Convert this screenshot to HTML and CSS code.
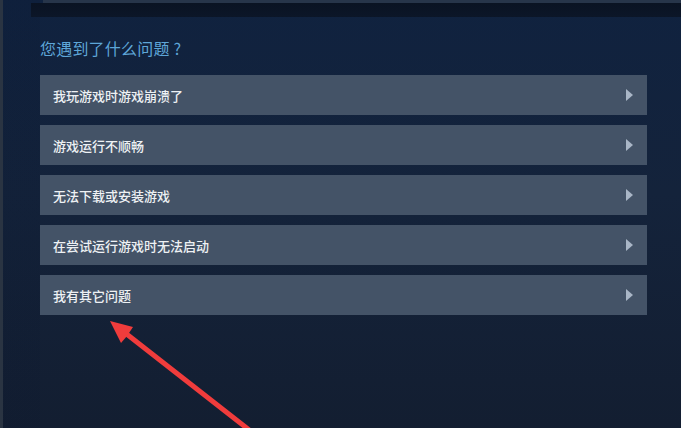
FILE: index.html
```html
<!DOCTYPE html>
<html lang="zh-CN">
<head>
<meta charset="utf-8">
<title>Steam 客服</title>
<link rel="stylesheet" href="styles.css">
</head>
<body>
<div class="page">
  <div class="topbar">
    <div class="topbar-edge"></div>
    <div class="topbar-shade"></div>
  </div>
  <main class="help">
    <h2 class="help-title">您遇到了什么问题 ?</h2>
    <ul class="options">
      <li class="option"><span>我玩游戏时游戏崩溃了</span><i class="caret"></i></li>
      <li class="option"><span>游戏运行不顺畅</span><i class="caret"></i></li>
      <li class="option"><span>无法下载或安装游戏</span><i class="caret"></i></li>
      <li class="option"><span>在尝试运行游戏时无法启动</span><i class="caret"></i></li>
      <li class="option"><span>我有其它问题</span><i class="caret"></i></li>
    </ul>
  </main>
  <svg class="pointer" width="681" height="428" viewBox="0 0 681 428">
    <line x1="124" y1="332" x2="262" y2="440" stroke="#f03c3c" stroke-width="5" stroke-linecap="round"/>
    <polygon points="110,321 121,343 127,336 133,327" fill="#f03c3c"/>
  </svg>
</div>
</body>
</html>
```
FILE: styles.css
```css
html, body {
  margin: 0;
  padding: 0;
  height: 100%;
}

body {
  background: #13203a;
  font-family: "Noto Sans CJK SC", "Noto Sans", sans-serif;
  overflow: hidden;
}

.page {
  position: relative;
  width: 681px;
  height: 428px;
  box-sizing: border-box;
  border-left: 3px solid #2a3442;
  background:
    linear-gradient(90deg, rgba(8, 20, 44, 0.15) 0, rgba(8, 20, 44, 0.15) 37px, rgba(0, 0, 0, 0) 37px),
    linear-gradient(180deg, #10223f 0%, #14233b 45%, #131e31 100%);
}

.topbar {
  display: flex;
  flex-direction: column;
}

.topbar-edge {
  height: 3px;
  margin-left: 40px;
  background: #27354a;
}

.topbar-shade {
  height: 14px;
  margin-left: 28px;
  background: linear-gradient(180deg, #0a1323 0%, #0c1628 100%);
}

.help {
  padding: 0 34px 0 37px;
}

.help-title {
  margin: 21px 0 0;
  height: 20px;
  line-height: 20px;
  font-size: 16px;
  font-weight: 400;
  color: #5ea6d8;
  letter-spacing: 0.2px;
}

.options {
  list-style: none;
  margin: 17px 0 0;
  padding: 0;
  display: flex;
  flex-direction: column;
  gap: 10px;
}

.option {
  height: 40px;
  display: flex;
  align-items: center;
  justify-content: space-between;
  padding: 0 14px 0 13px;
  background: #445367;
  color: #eef1f4;
  font-size: 13px;
  font-weight: 500;
}

.caret {
  width: 0;
  height: 0;
  border-top: 6px solid transparent;
  border-bottom: 6px solid transparent;
  border-left: 7px solid #a9b6c6;
}

.pointer {
  position: absolute;
  left: -3px;
  top: 0;
  pointer-events: none;
}
```
